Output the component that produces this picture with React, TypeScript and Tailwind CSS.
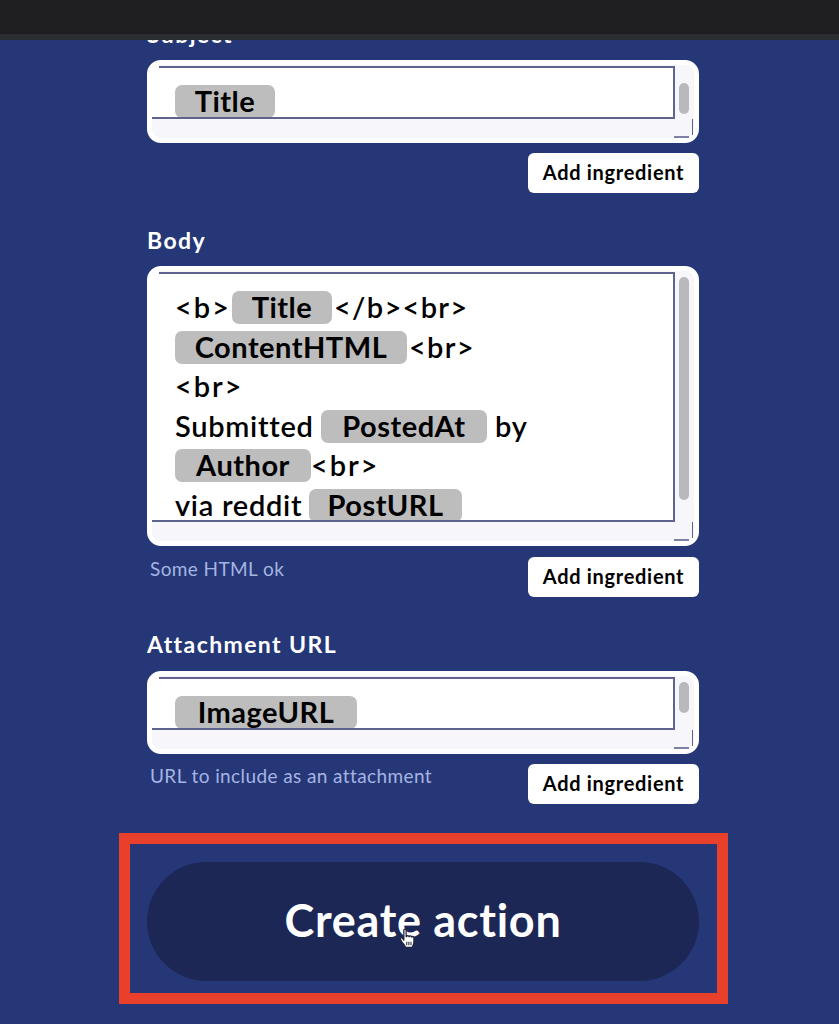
import React from "react";

const Pill = ({ width, children }: { width: string; children: React.ReactNode }) => (
    <span className={`inline-flex h-[33px] items-center justify-center rounded-[7px] bg-[#bdbdbd] pb-[2px] font-bold tracking-[0.5px] text-black ${width}`}>
        {children}
    </span>
);

const AddIngredient = () => (
    <button className="flex h-[40px] w-[171px] items-center justify-center rounded-[6px] bg-white pb-[2px] text-[20px] font-bold tracking-[0.7px] text-black">
        Add ingredient
    </button>
);

const Label = ({ children }: { children: React.ReactNode }) => (
    <div className="h-[29px] text-[23px] leading-[29px] font-bold tracking-[1.4px] text-white">{children}</div>
);

const Hint = ({ children }: { children: React.ReactNode }) => (
    <span className="ml-[3px] mt-[1px] text-[19px] leading-[22px] tracking-[0.4px] text-[#a6b4e4]">{children}</span>
);

const Row = ({ children }: { children: React.ReactNode }) => (
    <div className="flex h-[39.6px] items-start gap-[2px] tracking-[0.7px] whitespace-pre">{children}</div>
);

const Tag = ({ children }: { children: React.ReactNode }) => (
    <span className="tracking-[1.9px]">{children}</span>
);

const Field = ({
    height,
    thumb,
    thumbTop,
    children
}: {
    height: number;
    thumb: number;
    thumbTop: string;
    children: React.ReactNode;
}) => (
    <div
        className="relative rounded-[14px] border-[5px] border-white bg-[#f6f6fb] pt-[1px]"
        style={{ height }}
    >
        <div className="flex items-start">
            <div
                className="w-[523px] overflow-hidden border-r-2 border-b-2 border-[#5f6390] bg-white pl-[23px]"
                style={{ height: height - 30 }}
            >
                <div className="ml-[-16px] mb-[17px] border-t-2 border-[#5f6390]" />
                <div className="text-[29px] leading-[31px] font-semibold text-black">{children}</div>
            </div>
            <div className={`ml-[4px] w-[10px] rounded-full bg-[#b9b9bd] ${thumbTop}`} style={{ height: thumb }} />
        </div>
        <div className="absolute bottom-[3px] right-[1px] h-[16px] w-px bg-[#5f6390]" />
        <div className="absolute bottom-0 right-[5px] h-[2px] w-[15px] bg-[#7d81a6]" />
    </div>
);

const HandCursor = () => (
    <svg
        viewBox="0 0 16 20"
        className="absolute left-[399px] top-[928px] h-[21px] w-[17px]"
        fill="#ffffff"
        stroke="#20243c"
        strokeWidth="1.2"
        strokeLinejoin="round"
    >
        <path d="M4.5 2.2c0-1.4 2.2-1.4 2.2 0v6l.6-.1c0-1.3 2-1.2 2 .1l.5.1c.1-1.2 1.9-1.1 2 .2l.4.2c.2-1 1.9-.8 1.9.5v4.3c0 2.2-1.2 3.2-1.6 5H6.2c-.6-1.8-2-3.2-3.3-4.9L1.2 10.900c-.7-1.200.8-2.200 1.800-1.200l1.500 1.700z" />
        <path d="M7.300 13v3.500M9.300 13v3.500M11.300 13v3.500" fill="none" strokeWidth="1" />
    </svg>
);

export default function App() {
    return (
        <div className="relative flex h-[1024px] w-[839px] flex-col overflow-hidden bg-[#253776] font-['Lato',sans-serif]">
            <div className="z-10 h-[40px] shrink-0 border-b-[6px] border-[#2a2e31] bg-[#1f1f22]" />
            <div className="flex flex-col pl-[147px] pr-[140px]">
                <div className="mt-[-20px]">
                    <Label>Subject</Label>
                </div>
                <div className="mt-[11px]">
                    <Field height={83} thumb={31} thumbTop="mt-[17px]">
                        <Pill width="w-[100px]">Title</Pill>
                    </Field>
                </div>
                <div className="mt-[10px] flex justify-end">
                    <AddIngredient />
                </div>

                <div className="mt-[33px]">
                    <Label>Body</Label>
                </div>
                <div className="mt-[11px]">
                    <Field height={280} thumb={223} thumbTop="mt-[5px]">
                        <Row>
                            <span className="w-[55px] tracking-[1.9px]">{"<b>"}</span>
                            <Pill width="w-[100px]">Title</Pill>
                            <span className="tracking-[1.3px]">{"</b><br>"}</span>
                        </Row>
                        <Row>
                            <Pill width="w-[232px]">ContentHTML</Pill>
                            <span className="tracking-[1.3px]">{"<br>"}</span>
                        </Row>
                        <Row>
                            <Tag>{"<br>"}</Tag>
                        </Row>
                        <Row>
                            <span className="w-[144px]">Submitted</span>
                            <Pill width="w-[166px]">PostedAt</Pill>
                            <span className="ml-[6px]">by</span>
                        </Row>
                        <Row>
                            <Pill width="w-[136px]">Author</Pill>
                            <span className="ml-[-2px]">
                                <Tag>{"<br>"}</Tag>
                            </span>
                        </Row>
                        <Row>
                            <span className="w-[132px]">via reddit</span>
                            <Pill width="w-[153px]">PostURL</Pill>
                        </Row>
                    </Field>
                </div>
                <div className="mt-[11px] flex items-start justify-between">
                    <Hint>Some HTML ok</Hint>
                    <AddIngredient />
                </div>

                <div className="mt-[33px]">
                    <Label>Attachment URL</Label>
                </div>
                <div className="mt-[12px]">
                    <Field height={83} thumb={31} thumbTop="mt-[5px]">
                        <Pill width="w-[182px]">ImageURL</Pill>
                    </Field>
                </div>
                <div className="mt-[10px] flex items-start justify-between">
                    <Hint>URL to include as an attachment</Hint>
                    <AddIngredient />
                </div>

                <div className="ml-[-28px] mr-[-29px] mt-[29px] h-[171px] border-[11px] border-[#e8402a] pl-[17px] pr-[18px] pt-[18px]">
                    <button className="flex h-[119px] w-full items-center justify-center rounded-full bg-[#1c2755] pb-[2px] text-[45px] font-bold tracking-[0.7px] text-white">
                        Create action
                    </button>
                </div>
            </div>
            <HandCursor />
        </div>
    );
}
